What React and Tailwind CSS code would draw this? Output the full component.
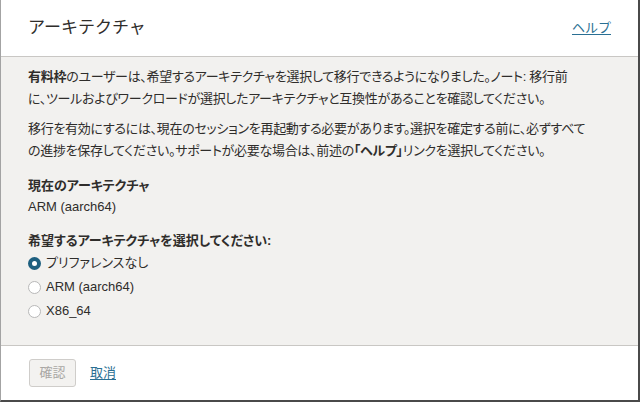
import React, { useState } from 'react';

const font = { fontFamily: '"Liberation Sans", "Noto Sans CJK JP", sans-serif' };

const Radio = ({ checked, label, onClick }) => (
  <label className="flex items-center h-6 cursor-pointer" onClick={onClick}>
    {checked ? (
      <span className="w-[13px] h-[13px] rounded-full bg-[#1d5f7f] flex items-center justify-center">
        <span className="w-[5px] h-[5px] rounded-full bg-white" />
      </span>
    ) : (
      <span className="w-[13px] h-[13px] rounded-full bg-white border border-[#b8b8b8]" />
    )}
    <span className="ml-[5px]">{label}</span>
  </label>
);

const App = () => {
  const [choice, setChoice] = useState('none');

  const options = [
    { id: 'none', label: 'プリファレンスなし' },
    { id: 'arm', label: 'ARM (aarch64)' },
    { id: 'x86', label: 'X86_64' },
  ];

  return (
    <div style={font} className="w-[640px] h-[402px] flex flex-col overflow-hidden bg-white text-[#2f2d2b] border-l border-l-[#a3a3a3] border-r-2 border-r-[#4a4a4a] border-b-2 border-b-[#4a4a4a]">
      {/* header */}
      <div className="h-[57px] shrink-0 flex items-center justify-between pl-[27px] pr-[27px] border-b border-[#c9c7c4]">
        <h1 className="text-[17px] font-normal">アーキテクチャ</h1>
        <a href="#" className="text-[13px] text-[#2a6f93] underline underline-offset-2">ヘルプ</a>
      </div>

      {/* body */}
      <div className="flex-1 bg-[#f2f1ef] px-[27px] pt-[9px] text-[13px] leading-[22px] [font-feature-settings:'palt'] whitespace-nowrap">
        <p className="tracking-[-0.3px]">
          <b>有料枠</b>のユーザーは、希望するアーキテクチャを選択して移行できるようになりました。ノート: 移行前
          <br />
          に、ツールおよびワークロードが選択したアーキテクチャと互換性があることを確認してください。
        </p>
        <p className="mt-2 tracking-[-0.3px]">
          移行を有効にするには、現在のセッションを再起動する必要があります。選択を確定する前に、必ずすべて
          <br />
          の進捗を保存してください。サポートが必要な場合は、前述の<b>「ヘルプ」</b>リンクを選択してください。
        </p>

        <div className="mt-[13px] leading-[21px]">
          <div className="font-bold">現在のアーキテクチャ</div>
          <div>ARM (aarch64)</div>
        </div>

        <div className="mt-[13px]">
          <div className="font-bold leading-[21px]">希望するアーキテクチャを選択してください:</div>
          <div className="flex flex-col">
            {options.map((o) => (
              <Radio key={o.id} checked={choice === o.id} label={o.label} onClick={() => setChoice(o.id)} />
            ))}
          </div>
        </div>
      </div>

      {/* footer */}
      <div className="h-[55px] shrink-0 flex items-center gap-[14px] pl-[28px] border-t border-[#c9c7c4]">
        <button disabled className="w-[47px] h-[28px] rounded-[3px] border border-[#cfcdca] bg-[#f3f2f0] text-[13px] text-[#a9a7a4]">
          確認
        </button>
        <a href="#" className="text-[13px] text-[#2a6f93] underline underline-offset-2">取消</a>
      </div>
    </div>
  );
};

export default App;
